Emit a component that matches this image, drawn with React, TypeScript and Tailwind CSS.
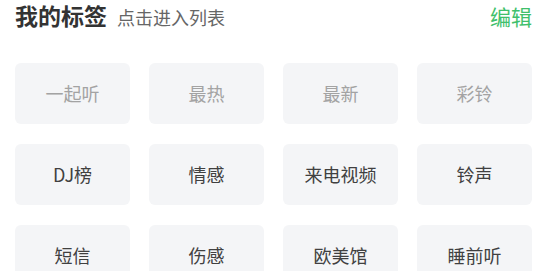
import React from "react";

const rows: { label: string; muted: boolean }[][] = [
  [
    { label: "一起听", muted: true },
    { label: "最热", muted: true },
    { label: "最新", muted: true },
    { label: "彩铃", muted: true },
  ],
  [
    { label: "DJ榜", muted: false },
    { label: "情感", muted: false },
    { label: "来电视频", muted: false },
    { label: "铃声", muted: false },
  ],
  [
    { label: "短信", muted: false },
    { label: "伤感", muted: false },
    { label: "欧美馆", muted: false },
    { label: "睡前听", muted: false },
  ],
];

const Tag = (props: { label: string; muted: boolean }) => {
  return (
    <div
      className={
        "flex h-[61px] items-center justify-center rounded-[6px] bg-[#f4f5f7] text-[18px] " +
        (props.muted ? "text-[#a3a3a3]" : "text-[#404040]")
      }
    >
      {props.label}
    </div>
  );
};

const App = () => {
  return (
    <div
      className="h-[271px] w-[542px] overflow-hidden bg-white pl-[15px] pr-[10px]"
      style={{ fontFamily: '"Noto Sans CJK SC", "Noto Sans", sans-serif' }}
    >
      <div className="flex h-[32px] items-center justify-between">
        <div className="flex items-baseline">
          <span className="text-[23px] font-bold leading-[32px] text-[#333333]">我的标签</span>
          <span className="ml-[10px] text-[18px] leading-[32px] text-[#666666]">点击进入列表</span>
        </div>
        <span className="text-[21px] leading-[32px] text-[#3fbf6b]">编辑</span>
      </div>
      <div className="mt-[31px] grid grid-cols-4 gap-x-[19px] gap-y-[20px]">
        {rows.flat().map((t) => (
          <Tag key={t.label} label={t.label} muted={t.muted} />
        ))}
      </div>
    </div>
  );
};

export default App;
